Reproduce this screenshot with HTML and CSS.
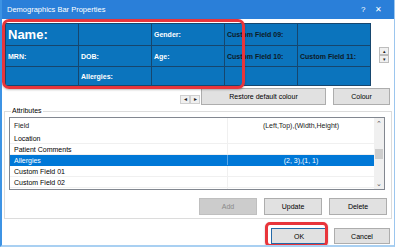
FILE: index.html
```html
<!doctype html>
<html lang="en">
  <head>
    <meta charset="UTF-8" />
    <title>Demographics Bar Properties</title>
    <link rel="stylesheet" href="styles.css">
  </head>
  <body>
    <div class="window">
      <!-- Title bar -->
      <div class="titlebar">
        <span class="title">Demographics Bar Properties</span>
        <span class="help">?</span>
        <span class="close">&#x2715;</span>
      </div>

      <!-- Demographics grid preview -->
      <div class="demo-row">
        <div class="demo-grid">
          <div class="cell name">Name:</div>
          <div class="cell"></div>
          <div class="cell">Gender:</div>
          <div class="cell custom">Custom Field 09:</div>
          <div class="cell"></div>
          <div class="cell">MRN:</div>
          <div class="cell">DOB:</div>
          <div class="cell">Age:</div>
          <div class="cell custom">Custom Field 10:</div>
          <div class="cell custom">Custom Field 11:</div>
          <div class="cell"></div>
          <div class="cell">Allergies:</div>
          <div class="cell"></div>
          <div class="cell"></div>
          <div class="cell"></div>
        </div>
        <div class="spinner">
          <button class="spin">&#9652;</button>
          <button class="spin">&#9662;</button>
        </div>
      </div>

      <!-- Colour buttons -->
      <div class="colour-row">
        <div class="arrows">
          <button class="arrow">&#9666;</button>
          <button class="arrow">&#9656;</button>
        </div>
        <button class="btn restore">Restore default colour</button>
        <button class="btn colour">Colour</button>
      </div>

      <!-- Attributes group -->
      <fieldset class="attributes">
        <legend>Attributes</legend>
        <div class="listview">
          <div class="list-body">
            <div class="list-row header">
              <span class="col-field">Field</span>
              <span class="col-pos">(Left,Top),(Width,Height)</span>
            </div>
            <div class="list-row">
              <span class="col-field">Location</span>
              <span class="col-pos"></span>
            </div>
            <div class="list-row">
              <span class="col-field">Patient Comments</span>
              <span class="col-pos"></span>
            </div>
            <div class="list-row selected">
              <span class="col-field">Allergies</span>
              <span class="col-pos">(2, 3),(1, 1)</span>
            </div>
            <div class="list-row">
              <span class="col-field">Custom Field 01</span>
              <span class="col-pos"></span>
            </div>
            <div class="list-row">
              <span class="col-field">Custom Field 02</span>
              <span class="col-pos"></span>
            </div>
            <div class="list-row">
              <span class="col-field">Custom Field 03</span>
              <span class="col-pos"></span>
            </div>
          </div>
          <div class="scrollbar">
            <span class="sb-arrow">&#8963;</span>
            <div class="sb-track"><div class="sb-thumb"></div></div>
            <span class="sb-arrow">&#8964;</span>
          </div>
        </div>
        <div class="edit-row">
          <button class="btn" disabled>Add</button>
          <button class="btn">Update</button>
          <button class="btn">Delete</button>
        </div>
      </fieldset>

      <!-- Dialog buttons -->
      <div class="dialog-row">
        <button class="btn default">OK</button>
        <button class="btn">Cancel</button>
      </div>

      <!-- Red annotation boxes -->
      <div class="mark mark-grid"></div>
      <div class="mark mark-ok"></div>
    </div>
  </body>
</html>
```

FILE: styles.css
```css
/* Page */
body {
  margin: 0;
  font-family: "Liberation Sans", Arial, sans-serif;
  font-size: 7px;
  color: #000;
}

button {
  font-family: "Liberation Sans", Arial, sans-serif;
  padding: 0;
  margin: 0;
}

.window {
  position: relative;
  width: 395px;
  height: 247px;
  box-sizing: border-box;
  background: #fff;
  border-left: 2px solid #3d93e4;
  border-right: 1px solid #9cc6ee;
  border-bottom: 2px solid #a9d0f2;
  overflow: hidden;
}

/* Title bar */
.titlebar {
  display: flex;
  align-items: center;
  height: 19px;
  margin-left: -2px;
  margin-right: -1px;
  padding-left: 7px;
  background: #2a7fd9;
  color: #fff;
  font-size: 7.5px;
}

.title {
  flex: 1;
}

.help {
  width: 14px;
  font-size: 8px;
}

.close {
  width: 20px;
  font-size: 8px;
}

/* Demographics grid */
.demo-row {
  display: flex;
  margin: 4px 0 0 3px;
}

.demo-grid {
  display: grid;
  grid-template-columns: repeat(5, 73px);
  grid-template-rows: 22px 21px 19px;
  background: #0b74bd;
  border-top: 1px solid #16466e;
  border-left: 1px solid #16466e;
}

.cell {
  box-sizing: border-box;
  display: flex;
  align-items: center;
  padding-left: 2px;
  border-right: 1px solid #16466e;
  border-bottom: 1px solid #16466e;
  color: #fff;
  font-weight: bold;
  font-size: 7px;
  white-space: nowrap;
  overflow: hidden;
}

.cell.name {
  font-size: 13px;
}

.cell.custom {
  color: #0d1a26;
}

.spinner {
  display: flex;
  flex-direction: column;
  margin: 24px 0 0 8px;
}

.spin {
  width: 10px;
  height: 8px;
  border: 1px solid #bdbdbd;
  background: #f0f0f0;
  font-size: 5px;
  line-height: 6px;
  color: #222;
}

/* Colour buttons */
.colour-row {
  display: flex;
  align-items: flex-end;
  margin: 2px 0 0 178px;
}

.arrows {
  display: flex;
  margin-bottom: 1px;
}

.arrow {
  width: 10px;
  height: 9px;
  border: 1px solid #cfcfcf;
  background: #f0f0f0;
  font-size: 6px;
  line-height: 7px;
  color: #222;
}

.btn {
  height: 17px;
  width: 58px;
  border: 1px solid #adadad;
  background: #e1e1e1;
  font-size: 7px;
  color: #000;
}

.btn:disabled {
  background: #cccccc;
  border-color: #bfbfbf;
  color: #8a8a8a;
}

.btn.restore {
  width: 125px;
  margin-left: 1px;
}

.btn.colour {
  width: 57px;
  margin-left: 7px;
}

.btn.default {
  border-color: #2469a8;
}

/* Attributes group */
.attributes {
  margin: 2px 0 0 2px;
  padding: 2px 4px 3px 4px;
  width: 388px;
  box-sizing: border-box;
  border: 1px solid #dcdcdc;
}

.attributes legend {
  margin-left: 2px;
  padding: 0 1px;
  font-size: 7px;
  line-height: 8px;
}

.listview {
  display: flex;
  height: 73px;
  box-sizing: border-box;
  border: 1px solid #828790;
  margin-right: 2px;
}

.list-body {
  flex: 1;
  overflow: hidden;
}

.list-row {
  display: flex;
  height: 11px;
  align-items: center;
  border-bottom: 1px solid #f0f0f0;
  box-sizing: border-box;
}

.list-row.header {
  height: 15px;
  border-bottom: none;
  color: #222;
}

.col-field {
  width: 218px;
  padding-left: 4px;
  box-sizing: border-box;
  height: 100%;
  display: flex;
  align-items: center;
  border-right: 1px solid #f0f0f0;
}

.col-pos {
  flex: 1;
  text-align: center;
}

.list-row.selected {
  background: #0078d7;
  color: #fff;
  border-bottom-color: #0078d7;
}

.list-row.selected .col-field {
  border-right-color: #5aa6e6;
}

.scrollbar {
  display: flex;
  flex-direction: column;
  width: 10px;
  background: #f0f0f0;
}

.sb-arrow {
  height: 11px;
  text-align: center;
  font-size: 7px;
  line-height: 11px;
  color: #555;
}

.sb-track {
  flex: 1;
  padding-top: 20px;
}

.sb-thumb {
  height: 10px;
  margin: 0 1px;
  background: #cdcdcd;
}

.edit-row {
  display: flex;
  justify-content: flex-end;
  gap: 7px;
  margin: 8px 0 0 0;
}

/* Dialog buttons */
.dialog-row {
  display: flex;
  justify-content: flex-end;
  gap: 7px;
  margin: 9px 4px 0 0;
}

.dialog-row .btn {
  width: 56px;
  height: 16px;
}

/* Red annotation boxes */
.mark {
  position: absolute;
  border: 3px solid #e8353b;
  box-shadow: 0 1px 2px rgba(0, 0, 0, 0.25);
}

.mark-grid {
  left: 0;
  top: 19px;
  width: 237px;
  height: 64px;
  border-radius: 7px;
}

.mark-ok {
  left: 263px;
  top: 222px;
  width: 57px;
  height: 19px;
  border-radius: 5px;
}
```
